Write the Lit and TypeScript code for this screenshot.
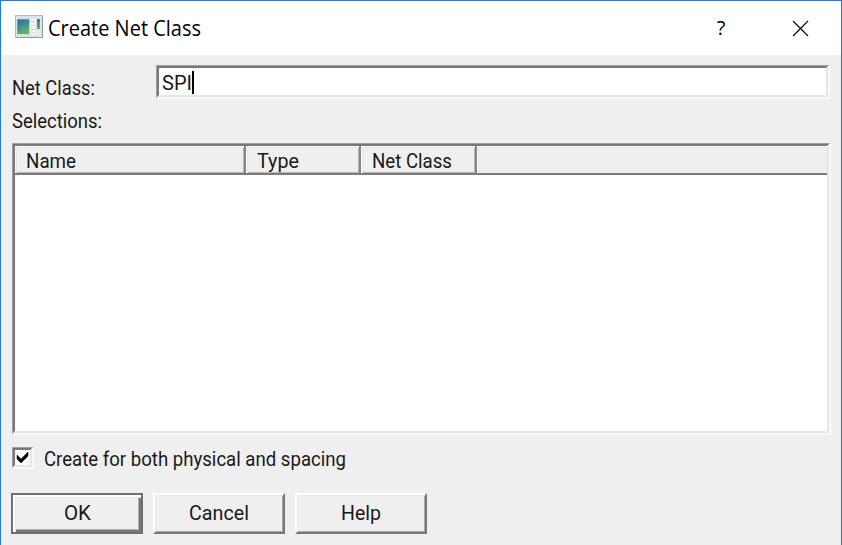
import { LitElement, html, css } from "lit";
import { customElement, property } from "lit/decorators.js";

/** A single line of text condensed or widened to a given advance width. */
@customElement("fit-text")
class FitText extends LitElement {
  @property({ type: Number }) width = 100;
  static styles = css`
    :host { display: block; white-space: nowrap; }
    span { display: inline-block; transform-origin: 0 50%; }
  `;
  render() { return html`<span><slot></slot></span>`; }
  firstUpdated() {
    this.style.width = this.width + "px";
    const s = this.renderRoot.querySelector("span") as HTMLElement;
    s.style.transform = `scaleX(${this.width / s.getBoundingClientRect().width})`;
  }
}

@customElement("app-root")
class AppRoot extends LitElement {
  static styles = css`
    * { box-sizing: border-box; }
    :host {
      display: block; width: 842px; height: 545px; overflow: hidden;
      font: 21px/24px Roboto, "Liberation Sans", sans-serif; color: #1a1a1a;
    }
    .window {
      height: 100%; background: #efefef;
      border: 1px solid #1a7fd4; border-bottom: 0;
      display: flex; flex-direction: column;
    }
    .title {
      height: 54px; flex: none; background: #fff; display: flex; align-items: center;
      padding-left: 14px; font-family: "Open Sans", "Noto Sans", sans-serif; color: #000;
    }
    .title .app { margin-right: 5px; margin-top: -3px; }
    .title fit-text { font-size: 21px; }
    .help { margin-left: auto; width: 14px; text-align: center; font-size: 20px; margin-right: 64px; }
    .close { margin-right: 32px; }
    svg { display: block; flex: none; }
    .body { padding: 10px 11px 0 11px; display: flex; flex-direction: column; }
    .field { display: flex; height: 34px; }
    .field .name { width: 144px; padding-top: 11px; }
    .sunken {
      border: solid; border-width: 2px;
      border-color: #a0a0a0 #f9f9f9 #f9f9f9 #a0a0a0; background: #fff;
    }
    .inner {
      height: 100%; border: solid; border-width: 2px;
      border-color: #787878 #e6e6e6 #e6e6e6 #787878;
    }
    .input { width: 674px; height: 34px; border-top-width: 1px; border-left-width: 1px; }
    .input .inner { display: flex; align-items: center; padding: 2px 0 0 3px; }
    .caret { width: 1.5px; height: 23px; margin-top: -1px; background: #000; }
    .sel { height: 24px; margin-top: 10px; }
    .table { width: 819px; height: 292px; margin-top: 10px; border-top-width: 1px; border-left-width: 1px; }
    .head { display: flex; height: 29px; background: #efefef; border-bottom: 2px solid #7c7c7c; }
    .cell {
      border-right: 2px solid #858585; padding: 3px 0 0 11px;
      box-shadow: inset 1px 1px #fff, inset 2px 2px #e6e6e6, inset -1px -1px #b5b5b5;
    }
    .cell:last-child { flex: 1; border-right: 0; box-shadow: inset 1px 1px #fff, inset 2px 2px #e6e6e6; }
    .check { display: flex; align-items: center; height: 24px; margin-top: 12px; }
    .box { width: 22px; height: 22px; margin: -2px 10px 0 0; border-top-width: 1px; border-left-width: 1px; }
    .buttons { display: flex; gap: 10px; margin: 22px 0 0 -1px; }
    .btn {
      width: 132px; height: 41px; display: flex; align-items: center; justify-content: center;
      border: solid; border-width: 2px; border-color: #fff #777 #777 #fff;
      box-shadow: inset 1px 1px #e6e6e6, inset -1px -1px #a6a6a6; padding-bottom: 1px;
    }
    .btn.default {
      border-color: #707070;
      box-shadow: inset 1px 1px #fdfdfd, inset 2px 2px #fdfdfd, inset 3px 3px #e8e8e8, inset -2px -2px #777, inset -3px -3px #b0b0b0;
    }
  `;
  columns = [
    { label: "Name", w: 231, tw: 50 },
    { label: "Type", w: 115, tw: 42 },
    { label: "Net Class", w: 116, tw: 80 },
  ];
  buttons = [
    { label: "OK", tw: 27 },
    { label: "Cancel", tw: 60 },
    { label: "Help", tw: 40 },
  ];
  render() {
    return html`
      <div class="window">
        <div class="title">
          <svg class="app" width="28" height="23" viewBox="0 0 28 23">
            <defs><linearGradient id="g" x1="0" y1="0" x2=".4" y2="1">
              <stop offset="0" stop-color="#2c6d9c"/><stop offset=".5" stop-color="#428f8c"/><stop offset="1" stop-color="#61b36c"/>
            </linearGradient></defs>
            <rect x=".5" y=".5" width="27" height="22" fill="#dfe3e6" stroke="#b4babf"/>
            <path d="M1 22.5H27.5V2" fill="none" stroke="#929a9f"/>
            <rect x="2" y="4" width="12.5" height="15.5" fill="url(#g)" stroke="#dce8e8" stroke-width=".6"/>
            <path d="M2.5 4.5H14V8Q7 10 2.5 15Z" fill="#3a7dac" opacity=".4"/>
            <rect x="15.5" y="4" width="5" height="16" fill="#f7f7f7"/>
            <path d="M16 6.5h4M16 10.5h4M16 14.5h4M16 18h4" stroke="#ced2d4"/>
            <rect x="22" y="4" width="3" height="10" fill="url(#g)"/>
            <path d="M21.5 16.5h4M21.5 19h4" stroke="#f8f8f8"/>
          </svg>
          <fit-text width="153">Create Net Class</fit-text>
          <span class="help">?</span>
          <svg class="close" width="17" height="17" viewBox="0 0 17 17"><path d="M1 1L16 16M16 1L1 16" stroke="#000" stroke-width="1.2"/></svg>
        </div>
        <div class="body">
          <div class="field">
            <div class="name"><fit-text width="83">Net Class:</fit-text></div>
            <div class="input sunken"><div class="inner">
              <fit-text width="30">SPI</fit-text><div class="caret"></div>
            </div></div>
          </div>
          <div class="sel"><fit-text width="90">Selections:</fit-text></div>
          <div class="table sunken"><div class="inner">
            <div class="head">
              ${this.columns.map((c) => html`<div class="cell" style="width:${c.w}px"><fit-text width=${c.tw}>${c.label}</fit-text></div>`)}
              <div class="cell"></div>
            </div>
          </div></div>
          <div class="check">
            <div class="box sunken"><div class="inner">
              <svg width="15" height="15" viewBox="0 0 15 15"><path d="M2 5L6 9L13 2V6L6 13L2 9Z" fill="#000" stroke="#000" stroke-width=".5"/></svg>
            </div></div>
            <fit-text width="302">Create for both physical and spacing</fit-text>
          </div>
          <div class="buttons">
            ${this.buttons.map((b, i) => html`<div class="btn ${i === 0 ? "default" : ""}"><fit-text width=${b.tw}>${b.label}</fit-text></div>`)}
          </div>
        </div>
      </div>`;
  }
}
